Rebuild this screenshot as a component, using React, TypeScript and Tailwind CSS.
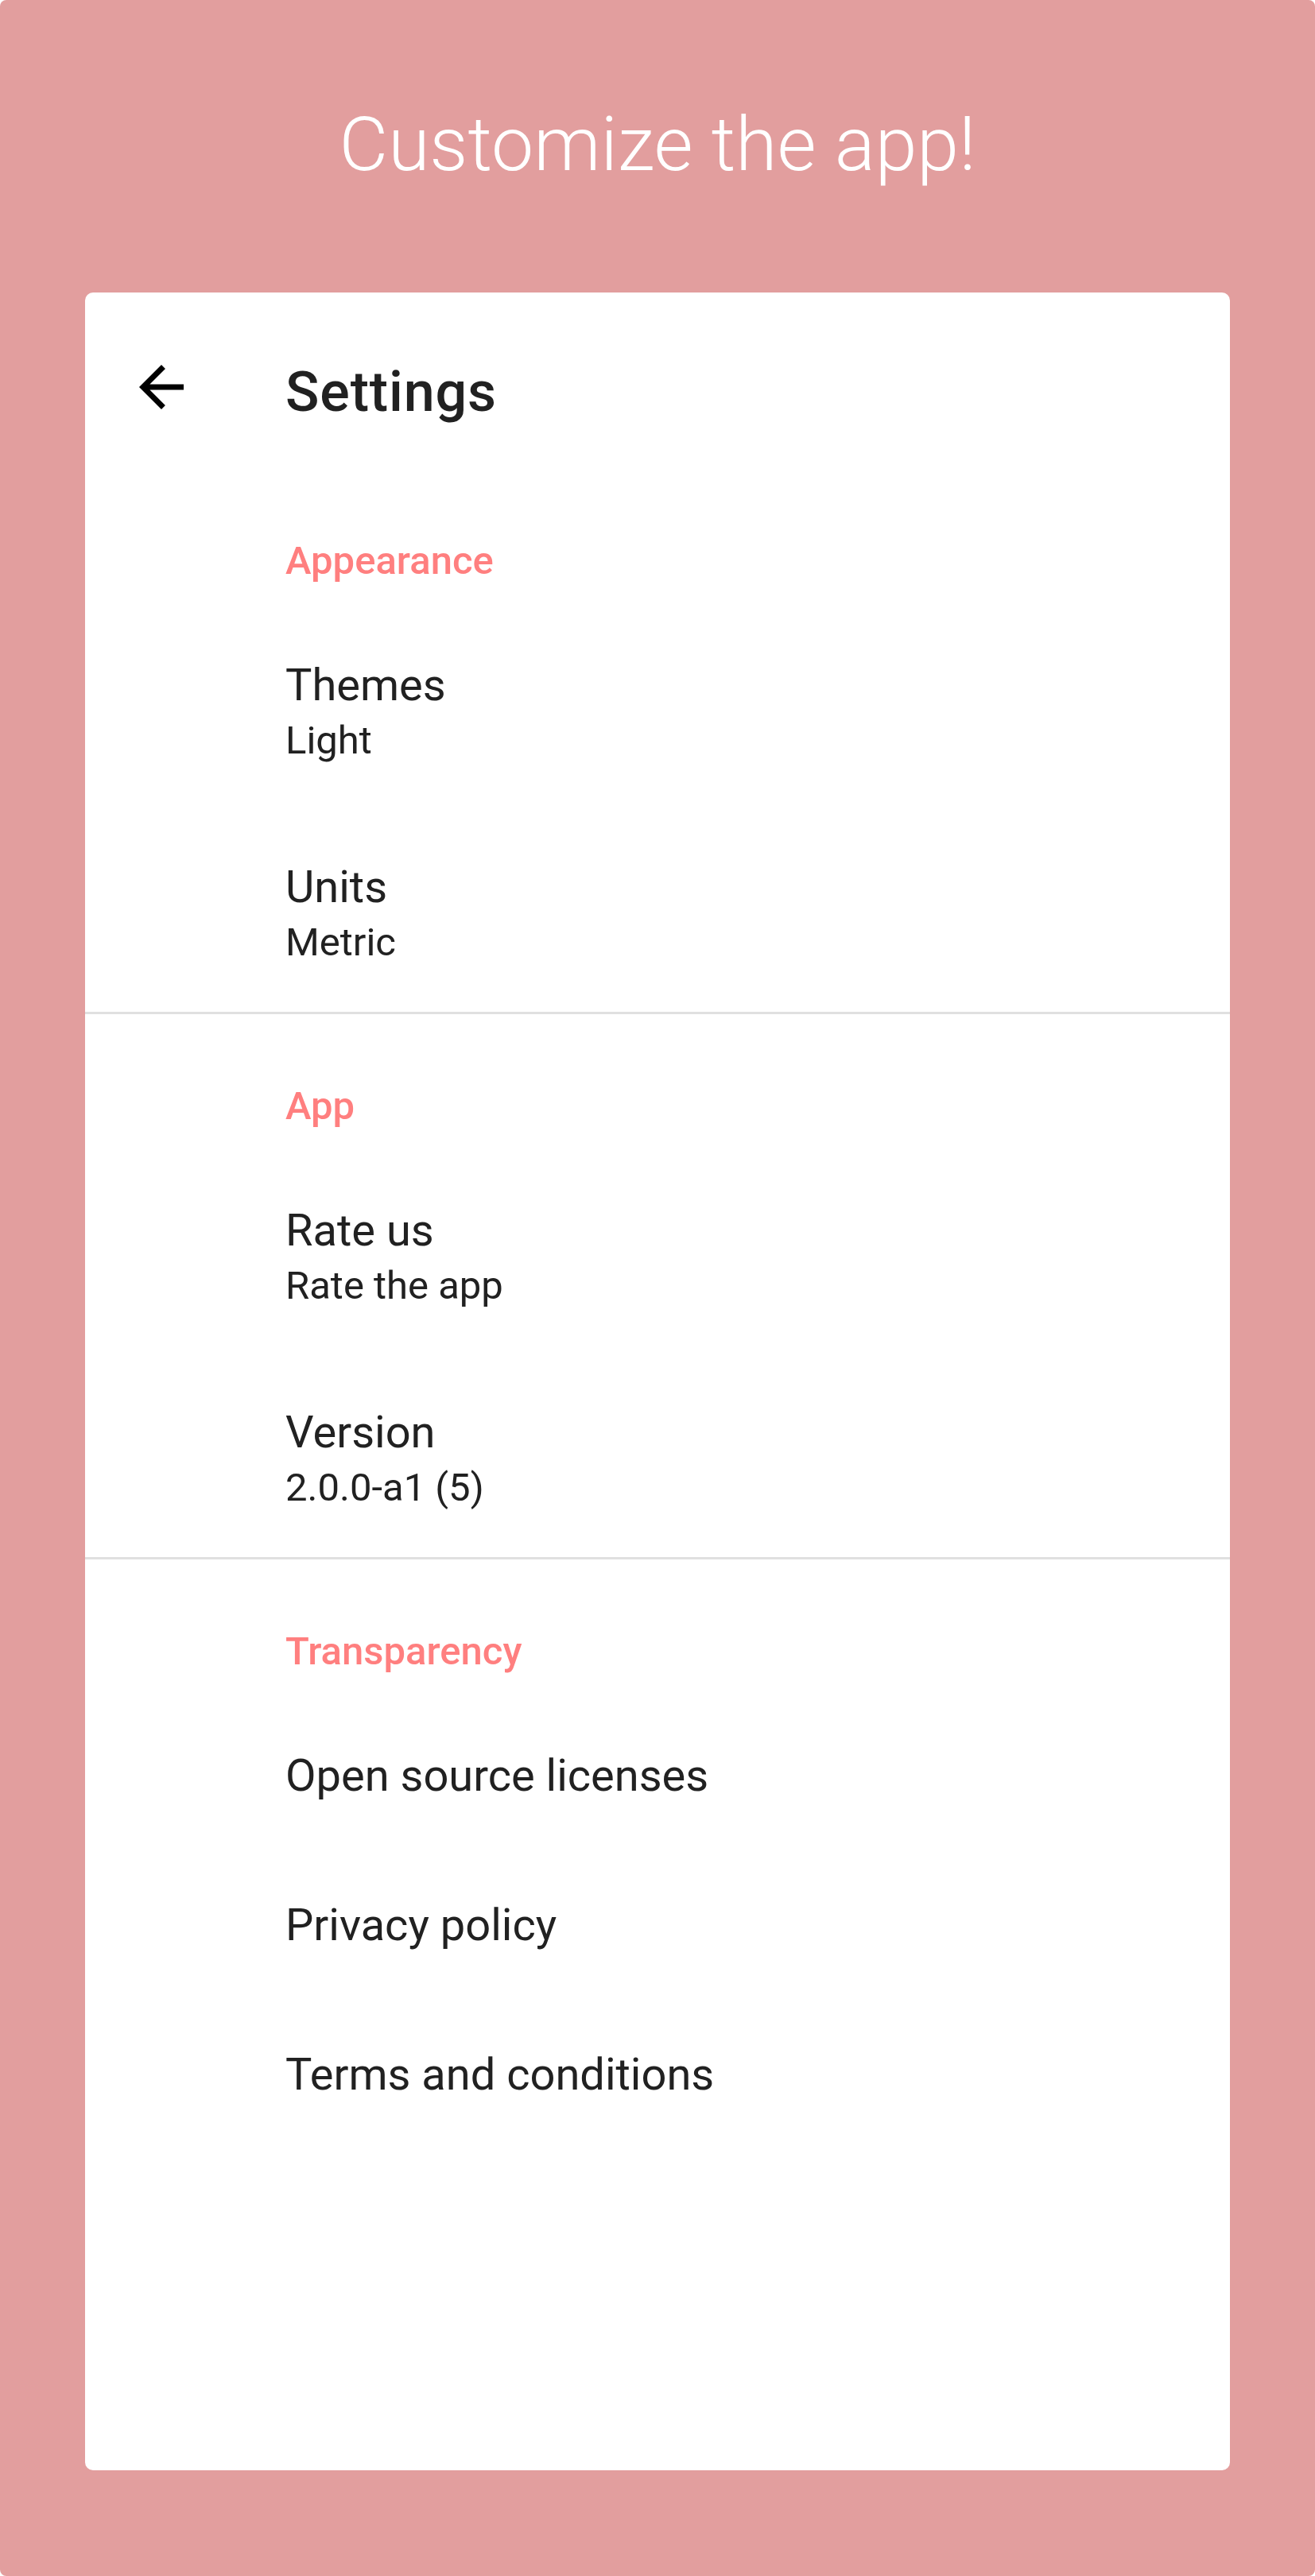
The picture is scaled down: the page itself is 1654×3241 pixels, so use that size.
const FONT = { fontFamily: "Roboto, 'Noto Sans', sans-serif" };

type Item = { title: string; summary?: string };
type Section = { name: string; items: Item[] };

const SECTIONS: Section[] = [
  {
    name: "Appearance",
    items: [
      { title: "Themes", summary: "Light" },
      { title: "Units", summary: "Metric" },
    ],
  },
  {
    name: "App",
    items: [
      { title: "Rate us", summary: "Rate the app" },
      { title: "Version", summary: "2.0.0-a1 (5)" },
    ],
  },
  {
    name: "Transparency",
    items: [
      { title: "Open source licenses" },
      { title: "Privacy policy" },
      { title: "Terms and conditions" },
    ],
  },
];

function BackArrow() {
  return (
    <svg width="84" height="84" viewBox="0 0 24 24" className="shrink-0 mt-[77px] ml-[54px]">
      <path
        d="M20 11H7.83l5.59-5.59L12 4l-8 8 8 8 1.41-1.41L7.83 13H20v-2z"
        fill="#000000"
      />
    </svg>
  );
}

export default function App() {
  return (
    <div className="w-[1654px] h-[3241px] bg-white" style={FONT}>
      <div className="w-full h-full bg-[#e29e9e] rounded-[8px] flex flex-col items-center">
        <h1 className="mt-[126px] text-[95px] leading-[112px] font-light text-white">
          Customize the app!
        </h1>

        <div className="mt-[130px] w-[1440px] h-[2740px] bg-white rounded-[10px] flex flex-col">
          <div className="flex items-start pb-[57px]">
            <BackArrow />
            <span className="mt-[85px] ml-[114px] text-[70px] leading-[80px] font-medium tracking-[0.0125em] text-[#212121]">
              Settings
            </span>
          </div>

          {SECTIONS.map((section, i) => (
            <div key={section.name}>
              {i > 0 && <div className="h-[3px] bg-[#e0e0e0]" />}
              <div className="pl-[252px] pt-[88px] pb-[31px] text-[49px] leading-[56px] font-medium text-[#ff7f7f]">
                {section.name}
              </div>
              {section.items.map((item) => (
                <div key={item.title} className="pl-[252px] pt-[65px] pb-[59px] text-[#212121]">
                  <div className="text-[56px] leading-[64px]">{item.title}</div>
                  {item.summary && (
                    <div className="mt-[10px] text-[49px] leading-[56px]">{item.summary}</div>
                  )}
                </div>
              ))}
            </div>
          ))}
        </div>
      </div>
    </div>
  );
}
